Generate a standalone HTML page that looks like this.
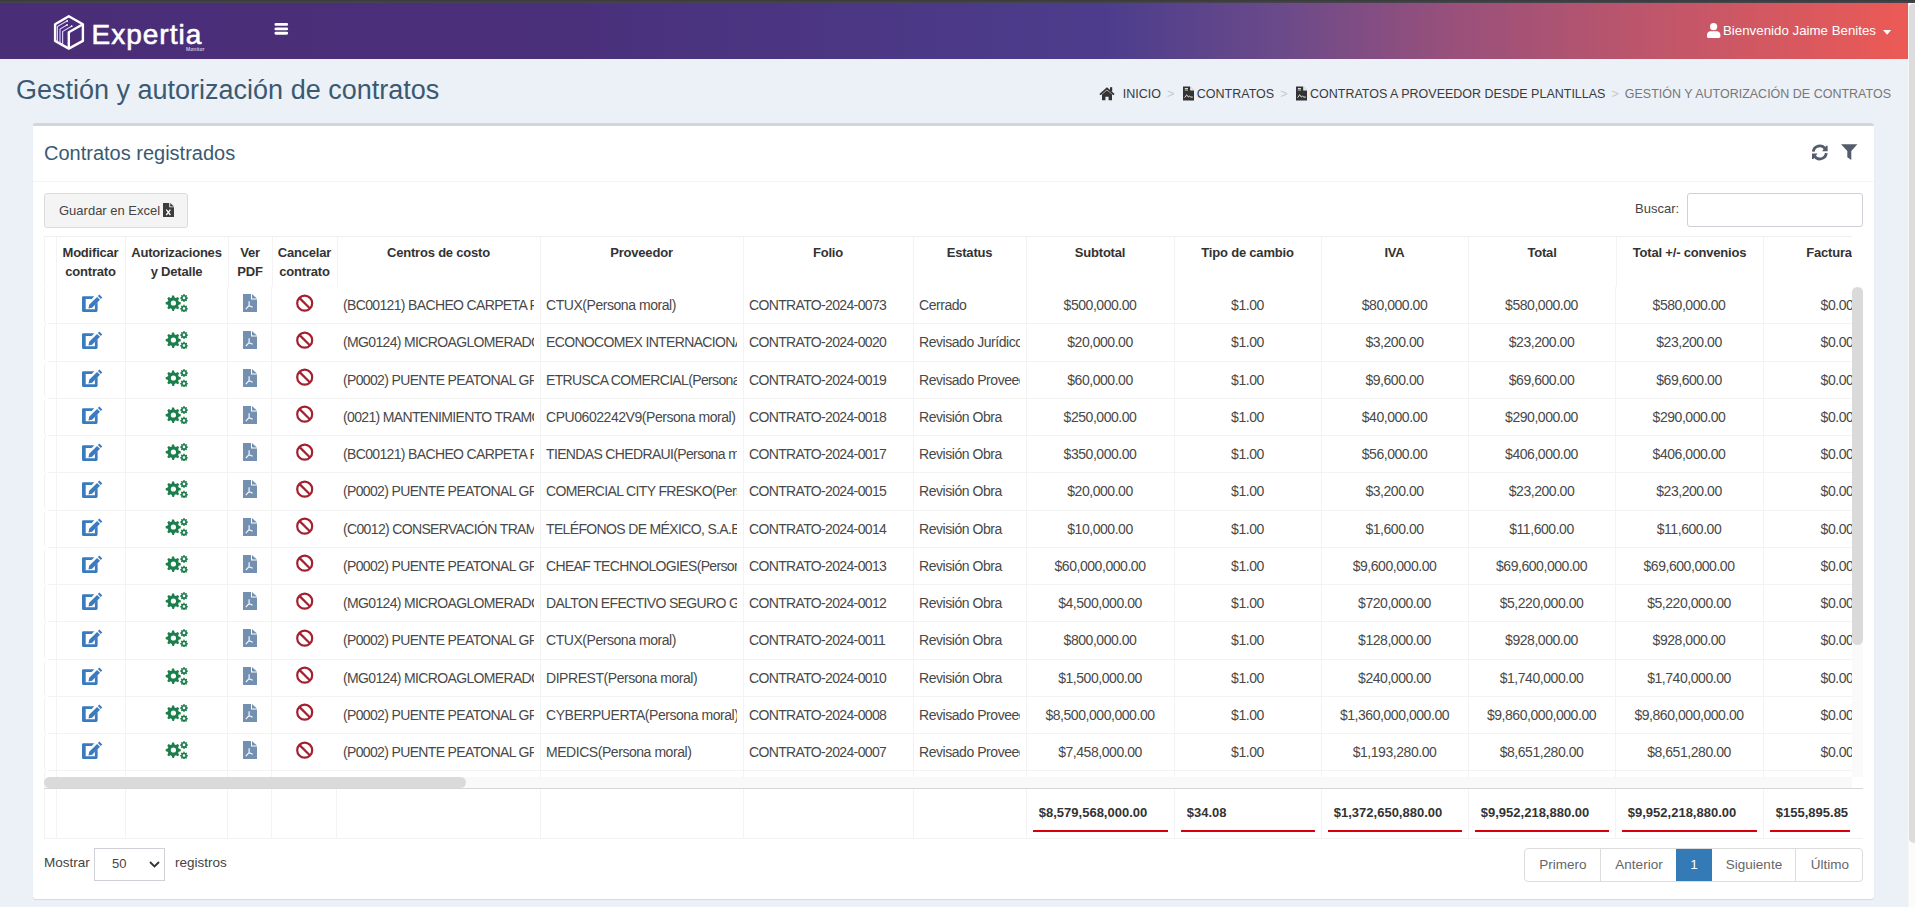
<!DOCTYPE html>
<html><head><meta charset="utf-8">
<style>
*{box-sizing:border-box;margin:0;padding:0}
html,body{width:1915px;height:907px;overflow:hidden}
body{background:#ecf0f7;font-family:"Liberation Sans",sans-serif;color:#333;position:relative}
.abs{position:absolute}
#topbar{left:0;top:0;width:1915px;height:3px;background:linear-gradient(#3a3b3b,#48454f)}
#nav{left:0;top:3px;width:1908px;height:56px;background:linear-gradient(to right,#4a2d77 0%,#4a2f7a 28%,#4c3d8c 58%,#6a4a8a 67%,#98507b 76%,#c0566a 87%,#ec5a55 100%)}
#pscroll{left:1908px;top:3px;width:7px;height:904px;background:#fbfbfb;border-left:1px solid #f6f6f6}
#pthumb{left:1909px;top:3.5px;width:6px;height:839.5px;background:#dcdcdc;border-radius:4px 0 0 5px}
.logo-t{left:91.5px;top:19px;font-size:28px;letter-spacing:1px;color:#fff;line-height:32px;white-space:nowrap;-webkit-text-stroke:.6px #fff}
.logo-m{left:186px;top:46px;font-size:5px;color:#f4f0fc;line-height:6px;letter-spacing:.3px}
.user{left:1723px;top:22.8px;height:16px;color:#fff;font-size:13.3px;line-height:16px;white-space:nowrap}
h1{position:absolute;left:16px;top:73.6px;font-size:27px;font-weight:normal;color:#3a5a72;line-height:32px;white-space:nowrap}
.bc{position:absolute;top:85.7px;right:24px;font-size:12.5px;line-height:16px;color:#3a3a3a;white-space:nowrap}
.bc .sep{color:#c8c8c8;margin:0 6px}
.bc .last{color:#777}
.bc svg{display:inline-block;vertical-align:top}
#box{left:33px;top:123px;width:1841px;height:776px;background:#fff;border-top:3px solid #d2d6de;border-radius:3px;box-shadow:0 1px 1px rgba(0,0,0,.1)}
.btitle{left:44px;top:141.4px;font-size:20px;color:#3a5a72;line-height:24px;white-space:nowrap}
#bhline{left:33px;top:181px;width:1841px;height:1px;background:#f4f4f4}
.btn{left:44px;top:193px;width:144px;height:35px;background:#f4f4f4;border:1px solid #dcdcdc;border-radius:3px}
.btntx{left:59px;top:202.5px;font-size:13px;color:#444;line-height:16px;white-space:nowrap}
.buscar{left:1635px;top:200.8px;font-size:13px;color:#444;line-height:16px}
.inp{left:1687px;top:193px;width:176px;height:34px;border:1px solid #cfd1d9;border-radius:3px;background:#fff}
#thead{left:44px;top:236px;width:1808px;height:51px;overflow:hidden;border-top:1px solid #f0f0f0}
.th{position:absolute;top:5.7px;text-align:center;font-weight:bold;font-size:13px;letter-spacing:-.2px;line-height:19px;color:#333;white-space:nowrap;overflow:hidden}
.hvl{position:absolute;top:0;width:1px;height:51px;background:#f3f3f3}
#tbody{left:44px;top:287px;width:1808px;height:490px;overflow:hidden}
.hl{position:absolute;left:4px;width:1804px;height:1px;background:#f3f3f3}
.vl{position:absolute;top:0;width:1px;height:490px;background:#f3f3f3}
.ic{position:absolute}
.rl{position:absolute;left:0;width:8px;border-left:1px solid #f1f1f1;border-radius:4px 0 0 4px}
.tl,.tc{position:absolute;font-size:14px;letter-spacing:-.45px;line-height:16px;color:#484848;white-space:nowrap;overflow:hidden}
.up{letter-spacing:-.65px}
.tc{text-align:center}
#vtrack{left:1852px;top:287px;width:11px;height:490px;background:#fafafa}
#vthumb{left:1852px;top:287px;width:11px;height:358px;background:#dadada;border-radius:6px}
#htrack{left:44px;top:777px;width:1808px;height:11px;background:#f9f9f9}
#hthumb{left:44px;top:777px;width:422px;height:11px;background:#dadada;border-radius:6px}
#tfoot{left:44px;top:788px;width:1819px;height:51px;border-top:1px solid #d6d6d6;border-bottom:1px solid #f2f2f2}
.fvl{position:absolute;top:0;width:1px;height:50px;background:#f3f3f3}
.ft{position:absolute;top:15.9px;height:27px;font-size:13px;font-weight:bold;line-height:16px;color:#333;padding-left:6px;border-bottom:2px solid #d8000c;white-space:nowrap;overflow:hidden}
.mostrar{left:44px;top:855.3px;font-size:13.5px;line-height:16px;color:#444}
.sel{left:94px;top:848px;width:71px;height:33px;border:1px solid #d0d0d6;background:#fff}
.seltx{left:112px;top:855.8px;font-size:13px;line-height:16px;color:#444}
.reg{left:175px;top:855.3px;font-size:13.5px;line-height:16px;color:#444}
.pag{left:1524px;top:848px;width:339px;height:34px;border:1px solid #dcdcdc;border-radius:4px;overflow:hidden}
.pg{position:absolute;top:0;height:32px;line-height:32px;text-align:center;font-size:13.5px;color:#666;border-left:1px solid #dcdcdc}
.pg.act{background:#337ab7;color:#fff;border-left:0;top:-1px;height:34px;line-height:34px}
</style></head><body>
<div id="topbar" class="abs"></div>
<div id="nav" class="abs"></div>
<div id="pscroll" class="abs"></div>
<div id="pthumb" class="abs"></div>
<svg class="abs" style="left:50px;top:12px" width="38" height="42" viewBox="0 0 38 42">
<g fill="none" stroke="#fff" stroke-width="2.4" stroke-linejoin="round">
<path d="M18.8 4.3L32.9 12.3V28.9L18.8 36.6L5.1 28.9V12.3Z"/>
<path d="M18.8 36.6V20.3L32.9 12.3"/>
</g>
<g fill="none" stroke="#d9c9ff" stroke-width="1.2">
<path d="M7.4 29.6V14.6l9.6-5.6"/>
<path d="M10 31V17.1l7-4.1"/>
<path d="M12.6 32.5V19.6l8.9-5.3"/>
</g>
<g fill="#fff"><circle cx="17.2" cy="8.9" r=".9"/><circle cx="17.1" cy="12.9" r=".9"/><circle cx="21.7" cy="14.2" r=".9"/></g>
</svg>
<div class="abs logo-t">Expertia</div>
<div class="abs logo-m">Monitor</div>
<svg class="abs" style="left:274px;top:21.8px" width="15" height="14" viewBox="0 0 15 14"><g stroke="#fff" stroke-width="2.9" stroke-linecap="round"><path d="M1.9 2.4h10.8M1.9 6.9h10.8M1.9 11.3h10.8"/></g></svg>
<svg class="abs" style="left:1707px;top:23px" width="14" height="15" viewBox="0 0 14 15"><circle cx="6.6" cy="3.7" r="3.6" fill="#fff"/><path fill="#fff" d="M3.6 8.2h6c2.1 0 3.8 1.7 3.8 3.8v1.5c0 .8-.6 1.4-1.4 1.4H1.2C.5 14.9 0 14.3 0 13.5V12c0-2.1 1.6-3.8 3.6-3.8z"/></svg>
<div class="abs user">Bienvenido Jaime Benites</div>
<svg class="abs" style="left:1882.5px;top:29.5px" width="9" height="5" viewBox="0 0 9 5"><path d="M0 0h8.2L4.1 4.8z" fill="#fff"/></svg>
<h1>Gestión y autorización de contratos</h1>
<div class="bc"><svg width="16" height="16" viewBox="0 0 16 16" style="margin-right:8px;margin-left:0"><path d="M1 8.6L8 2.4l7 6.2" fill="none" stroke="#333" stroke-width="1.9"/><rect x="11" y="1.2" width="2.2" height="4" fill="#333"/><path d="M3 8.6L8 4.2l5 4.4v5.7H9.6v-3.6H6.4v3.6H3z" fill="#333"/></svg>INICIO<span class="sep">&gt;</span><svg width="11" height="16" viewBox="0 0 11 16" style="margin-left:2.5px;margin-right:3px"><path d="M0 .5h7l4 4V14.5H0z" fill="#333"/><path d="M7.2.5v4h3.8" fill="#eceff4"/><path d="M7.2.5L11 4.5H7.2z" fill="#fff" opacity=".0"/><path d="M1.8 2.5h3.2M1.8 4h3.2" stroke="#fff" stroke-width=".8"/><path d="M1.5 11.5c1-.2 1.6-2.6 2.2-2.6.7 0 .8 2 1.6 2 .6 0 .7-.7 1.2-.7.5 0 .6.9 1.5.9h1.8" fill="none" stroke="#fff" stroke-width=".9"/></svg>CONTRATOS<span class="sep">&gt;</span><svg width="11" height="16" viewBox="0 0 11 16" style="margin-left:2.5px;margin-right:3px"><path d="M0 .5h7l4 4V14.5H0z" fill="#333"/><path d="M7.2.5v4h3.8" fill="#eceff4"/><path d="M1.8 2.5h3.2M1.8 4h3.2" stroke="#fff" stroke-width=".8"/><path d="M1.5 11.5c1-.2 1.6-2.6 2.2-2.6.7 0 .8 2 1.6 2 .6 0 .7-.7 1.2-.7.5 0 .6.9 1.5.9h1.8" fill="none" stroke="#fff" stroke-width=".9"/></svg>CONTRATOS A PROVEEDOR DESDE PLANTILLAS<span class="sep">&gt;</span><span class="last">GESTIÓN Y AUTORIZACIÓN DE CONTRATOS</span></div>
<div id="box" class="abs"></div>
<div class="abs btitle">Contratos registrados</div>
<svg class="abs" style="left:1811px;top:143.5px" width="18" height="17" viewBox="0 0 18 17"><g fill="none" stroke="#555c6e" stroke-width="2.8"><path d="M2.3 7.6A6.5 6.5 0 0 1 14.1 4.67"/><path d="M15.3 9.2A6.5 6.5 0 0 1 3.5 12.13"/></g><g fill="#555c6e"><path d="M15.3 1.7h1.3v5.65H11.1z"/><path d="M2.3 15.1H1V9.45h5.5z"/></g></svg>
<svg class="abs" style="left:1840.5px;top:144px" width="17" height="17" viewBox="0 0 17 17"><path fill="#555c6e" d="M0 .3h16.4L10.3 7v9L6.3 13.2V7z"/></svg>
<div id="bhline" class="abs"></div>
<div class="abs btn"></div>
<div class="abs btntx">Guardar en Excel</div>
<svg class="abs" style="left:163px;top:203px" width="11" height="14" viewBox="0 0 11 14"><path d="M0 0h6.2v4.3H11V14H0z" fill="#3d3d3d"/><path d="M7.2 0L11 3.4H7.2z" fill="#3d3d3d"/><path d="M3.3 6.6l4.1 5.4M7.4 6.6L3.3 12" stroke="#fff" stroke-width="1.3"/></svg>
<div class="abs buscar">Buscar:</div>
<div class="abs inp"></div>
<div id="thead" class="abs">
<div class="hvl" style="left:0"></div>
<div class="th" style="left:12.0px;width:69.0px">Modificar<br>contrato</div>
<div class="hvl" style="left:12.0px"></div>
<div class="th" style="left:81.0px;width:103.0px">Autorizaciones<br>y Detalle</div>
<div class="hvl" style="left:81.0px"></div>
<div class="th" style="left:184.0px;width:44.0px">Ver<br>PDF</div>
<div class="hvl" style="left:184.0px"></div>
<div class="th" style="left:228.0px;width:65.0px">Cancelar<br>contrato</div>
<div class="hvl" style="left:228.0px"></div>
<div class="th" style="left:293.0px;width:203.0px">Centros de costo</div>
<div class="hvl" style="left:293.0px"></div>
<div class="th" style="left:496.0px;width:203.0px">Proveedor</div>
<div class="hvl" style="left:496.0px"></div>
<div class="th" style="left:699.0px;width:170.0px">Folio</div>
<div class="hvl" style="left:699.0px"></div>
<div class="th" style="left:869.0px;width:113.0px">Estatus</div>
<div class="hvl" style="left:869.0px"></div>
<div class="th" style="left:982.0px;width:148.0px">Subtotal</div>
<div class="hvl" style="left:982.0px"></div>
<div class="th" style="left:1130.0px;width:147.0px">Tipo de cambio</div>
<div class="hvl" style="left:1130.0px"></div>
<div class="th" style="left:1277.0px;width:147.0px">IVA</div>
<div class="hvl" style="left:1277.0px"></div>
<div class="th" style="left:1424.0px;width:148.0px">Total</div>
<div class="hvl" style="left:1424.0px"></div>
<div class="th" style="left:1572.0px;width:147.0px">Total +/- convenios</div>
<div class="hvl" style="left:1572.0px"></div>
<div class="th" style="left:1719.0px;width:132.0px">Factura</div>
<div class="hvl" style="left:1719.0px"></div>
</div>
<div id="tbody" class="abs">
<div class="hl" style="top:36.25px"></div>
<div class="rl" style="top:0.00px;height:36.75px"></div>
<svg class="ic" style="left:37.5px;top:7.00px" width="21" height="18" viewBox="0 0 21 18"><path fill="#3a7bbf" d="M1.2 2.3h11.1l-2.6 2.6H3.7v10.3h9.2v-4.4l2.7-2.7v8.5c0 .7-.6 1.3-1.3 1.3H1.2C.5 17.9 0 17.3 0 16.6V3.6c0-.7.5-1.3 1.2-1.3z"/><path fill="#3a7bbf" d="M17.4.6l2.9 2.9-1.5 1.5-2.9-2.9zM15.1 2.9l2.9 2.9-7.9 7.9-3.6.8.7-3.7z"/></svg>
<svg class="ic" style="left:120.75px;top:7.00px" width="23" height="18" viewBox="0 0 23 18"><g fill="#1b7f4c"><path transform="translate(0,-.8)" d="M7 2.2l2 .1.6 2 1.3.6 1.8-1 1.4 1.4-1 1.8.6 1.3 2 .6v2l-2 .6-.6 1.3 1 1.8-1.4 1.4-1.8-1-1.3.6-.6 2H7.4l-.6-2-1.3-.6-1.8 1-1.4-1.4 1-1.8-.6-1.3-2-.6v-2l2-.6.6-1.3-1-1.8 1.4-1.4 1.8 1 1.3-.6zM8.4 7.2a2.6 2.6 0 100 5.2 2.6 2.6 0 000-5.2z"/><path d="M18.5 0l1 .1.3 1 .7.4.9-.5.7.7-.5.9.3.7 1 .3v1l-1 .3-.3.7.5.9-.7.7-.9-.5-.7.3-.3 1h-1l-.3-1-.7-.3-.9.5-.7-.7.5-.9-.3-.7-1-.3v-1l1-.3.3-.7-.5-.9.7-.7.9.5.7-.4zM19 2.6a1.3 1.3 0 100 2.6 1.3 1.3 0 000-2.6z"/><path d="M18.5 10.6l1 .1.3 1 .7.4.9-.5.7.7-.5.9.3.7 1 .3v1l-1 .3-.3.7.5.9-.7.7-.9-.5-.7.3-.3 1h-1l-.3-1-.7-.3-.9.5-.7-.7.5-.9-.3-.7-1-.3v-1l1-.3.3-.7-.5-.9.7-.7.9.5.7-.4zM19 13.2a1.3 1.3 0 100 2.6 1.3 1.3 0 000-2.6z"/></g></svg>
<svg class="ic" style="left:199.0px;top:7.00px" width="14" height="18" viewBox="0 0 14 18"><path fill="#7490b0" d="M0 0h8v5.5h6V18H0z"/><path fill="#7490b0" d="M9 0l5 4.6H9z"/><path fill="none" stroke="#fff" stroke-width="1.1" d="M6.1 7.3v4.4M6.1 11.7l3.6 1.6M6.1 11.7l-3.3 3.5"/></svg>
<svg class="ic" style="left:251.5px;top:6.50px" width="18" height="18" viewBox="0 0 18 18"><circle cx="8.7" cy="9.2" r="7.5" fill="none" stroke="#a3202f" stroke-width="2.2"/><path d="M3.6 4.1l10.2 10.2" stroke="#a3202f" stroke-width="2.2"/></svg>
<div class="tl up" style="left:299.0px;top:10.20px;width:191.0px">(BC00121) BACHEO CARPETA RAMPA</div>
<div class="tl" style="left:502.0px;top:10.20px;width:191.0px">CTUX(Persona moral)</div>
<div class="tl up" style="left:705.0px;top:10.20px;width:158.0px">CONTRATO-2024-0073</div>
<div class="tl" style="left:875.0px;top:10.20px;width:101.0px">Cerrado</div>
<div class="tc" style="left:982.0px;top:10.20px;width:148.0px">$500,000.00</div>
<div class="tc" style="left:1130.0px;top:10.20px;width:147.0px">$1.00</div>
<div class="tc" style="left:1277.0px;top:10.20px;width:147.0px">$80,000.00</div>
<div class="tc" style="left:1424.0px;top:10.20px;width:147.0px">$580,000.00</div>
<div class="tc" style="left:1571.0px;top:10.20px;width:148.0px">$580,000.00</div>
<div class="tc" style="left:1719.0px;top:10.20px;width:148.0px">$0.00</div>
<div class="hl" style="top:73.50px"></div>
<div class="rl" style="top:37.25px;height:36.75px"></div>
<svg class="ic" style="left:37.5px;top:44.25px" width="21" height="18" viewBox="0 0 21 18"><path fill="#3a7bbf" d="M1.2 2.3h11.1l-2.6 2.6H3.7v10.3h9.2v-4.4l2.7-2.7v8.5c0 .7-.6 1.3-1.3 1.3H1.2C.5 17.9 0 17.3 0 16.6V3.6c0-.7.5-1.3 1.2-1.3z"/><path fill="#3a7bbf" d="M17.4.6l2.9 2.9-1.5 1.5-2.9-2.9zM15.1 2.9l2.9 2.9-7.9 7.9-3.6.8.7-3.7z"/></svg>
<svg class="ic" style="left:120.75px;top:44.25px" width="23" height="18" viewBox="0 0 23 18"><g fill="#1b7f4c"><path transform="translate(0,-.8)" d="M7 2.2l2 .1.6 2 1.3.6 1.8-1 1.4 1.4-1 1.8.6 1.3 2 .6v2l-2 .6-.6 1.3 1 1.8-1.4 1.4-1.8-1-1.3.6-.6 2H7.4l-.6-2-1.3-.6-1.8 1-1.4-1.4 1-1.8-.6-1.3-2-.6v-2l2-.6.6-1.3-1-1.8 1.4-1.4 1.8 1 1.3-.6zM8.4 7.2a2.6 2.6 0 100 5.2 2.6 2.6 0 000-5.2z"/><path d="M18.5 0l1 .1.3 1 .7.4.9-.5.7.7-.5.9.3.7 1 .3v1l-1 .3-.3.7.5.9-.7.7-.9-.5-.7.3-.3 1h-1l-.3-1-.7-.3-.9.5-.7-.7.5-.9-.3-.7-1-.3v-1l1-.3.3-.7-.5-.9.7-.7.9.5.7-.4zM19 2.6a1.3 1.3 0 100 2.6 1.3 1.3 0 000-2.6z"/><path d="M18.5 10.6l1 .1.3 1 .7.4.9-.5.7.7-.5.9.3.7 1 .3v1l-1 .3-.3.7.5.9-.7.7-.9-.5-.7.3-.3 1h-1l-.3-1-.7-.3-.9.5-.7-.7.5-.9-.3-.7-1-.3v-1l1-.3.3-.7-.5-.9.7-.7.9.5.7-.4zM19 13.2a1.3 1.3 0 100 2.6 1.3 1.3 0 000-2.6z"/></g></svg>
<svg class="ic" style="left:199.0px;top:44.25px" width="14" height="18" viewBox="0 0 14 18"><path fill="#7490b0" d="M0 0h8v5.5h6V18H0z"/><path fill="#7490b0" d="M9 0l5 4.6H9z"/><path fill="none" stroke="#fff" stroke-width="1.1" d="M6.1 7.3v4.4M6.1 11.7l3.6 1.6M6.1 11.7l-3.3 3.5"/></svg>
<svg class="ic" style="left:251.5px;top:43.75px" width="18" height="18" viewBox="0 0 18 18"><circle cx="8.7" cy="9.2" r="7.5" fill="none" stroke="#a3202f" stroke-width="2.2"/><path d="M3.6 4.1l10.2 10.2" stroke="#a3202f" stroke-width="2.2"/></svg>
<div class="tl up" style="left:299.0px;top:47.45px;width:191.0px">(MG0124) MICROAGLOMERADO ASFALTICO</div>
<div class="tl up" style="left:502.0px;top:47.45px;width:191.0px">ECONOCOMEX INTERNACIONAL(Persona moral)</div>
<div class="tl up" style="left:705.0px;top:47.45px;width:158.0px">CONTRATO-2024-0020</div>
<div class="tl" style="left:875.0px;top:47.45px;width:101.0px">Revisado Jurídico</div>
<div class="tc" style="left:982.0px;top:47.45px;width:148.0px">$20,000.00</div>
<div class="tc" style="left:1130.0px;top:47.45px;width:147.0px">$1.00</div>
<div class="tc" style="left:1277.0px;top:47.45px;width:147.0px">$3,200.00</div>
<div class="tc" style="left:1424.0px;top:47.45px;width:147.0px">$23,200.00</div>
<div class="tc" style="left:1571.0px;top:47.45px;width:148.0px">$23,200.00</div>
<div class="tc" style="left:1719.0px;top:47.45px;width:148.0px">$0.00</div>
<div class="hl" style="top:110.75px"></div>
<div class="rl" style="top:74.50px;height:36.75px"></div>
<svg class="ic" style="left:37.5px;top:81.50px" width="21" height="18" viewBox="0 0 21 18"><path fill="#3a7bbf" d="M1.2 2.3h11.1l-2.6 2.6H3.7v10.3h9.2v-4.4l2.7-2.7v8.5c0 .7-.6 1.3-1.3 1.3H1.2C.5 17.9 0 17.3 0 16.6V3.6c0-.7.5-1.3 1.2-1.3z"/><path fill="#3a7bbf" d="M17.4.6l2.9 2.9-1.5 1.5-2.9-2.9zM15.1 2.9l2.9 2.9-7.9 7.9-3.6.8.7-3.7z"/></svg>
<svg class="ic" style="left:120.75px;top:81.50px" width="23" height="18" viewBox="0 0 23 18"><g fill="#1b7f4c"><path transform="translate(0,-.8)" d="M7 2.2l2 .1.6 2 1.3.6 1.8-1 1.4 1.4-1 1.8.6 1.3 2 .6v2l-2 .6-.6 1.3 1 1.8-1.4 1.4-1.8-1-1.3.6-.6 2H7.4l-.6-2-1.3-.6-1.8 1-1.4-1.4 1-1.8-.6-1.3-2-.6v-2l2-.6.6-1.3-1-1.8 1.4-1.4 1.8 1 1.3-.6zM8.4 7.2a2.6 2.6 0 100 5.2 2.6 2.6 0 000-5.2z"/><path d="M18.5 0l1 .1.3 1 .7.4.9-.5.7.7-.5.9.3.7 1 .3v1l-1 .3-.3.7.5.9-.7.7-.9-.5-.7.3-.3 1h-1l-.3-1-.7-.3-.9.5-.7-.7.5-.9-.3-.7-1-.3v-1l1-.3.3-.7-.5-.9.7-.7.9.5.7-.4zM19 2.6a1.3 1.3 0 100 2.6 1.3 1.3 0 000-2.6z"/><path d="M18.5 10.6l1 .1.3 1 .7.4.9-.5.7.7-.5.9.3.7 1 .3v1l-1 .3-.3.7.5.9-.7.7-.9-.5-.7.3-.3 1h-1l-.3-1-.7-.3-.9.5-.7-.7.5-.9-.3-.7-1-.3v-1l1-.3.3-.7-.5-.9.7-.7.9.5.7-.4zM19 13.2a1.3 1.3 0 100 2.6 1.3 1.3 0 000-2.6z"/></g></svg>
<svg class="ic" style="left:199.0px;top:81.50px" width="14" height="18" viewBox="0 0 14 18"><path fill="#7490b0" d="M0 0h8v5.5h6V18H0z"/><path fill="#7490b0" d="M9 0l5 4.6H9z"/><path fill="none" stroke="#fff" stroke-width="1.1" d="M6.1 7.3v4.4M6.1 11.7l3.6 1.6M6.1 11.7l-3.3 3.5"/></svg>
<svg class="ic" style="left:251.5px;top:81.00px" width="18" height="18" viewBox="0 0 18 18"><circle cx="8.7" cy="9.2" r="7.5" fill="none" stroke="#a3202f" stroke-width="2.2"/><path d="M3.6 4.1l10.2 10.2" stroke="#a3202f" stroke-width="2.2"/></svg>
<div class="tl up" style="left:299.0px;top:84.70px;width:191.0px">(P0002) PUENTE PEATONAL GRANDE</div>
<div class="tl up" style="left:502.0px;top:84.70px;width:191.0px">ETRUSCA COMERCIAL(Persona moral)</div>
<div class="tl up" style="left:705.0px;top:84.70px;width:158.0px">CONTRATO-2024-0019</div>
<div class="tl" style="left:875.0px;top:84.70px;width:101.0px">Revisado Proveedor</div>
<div class="tc" style="left:982.0px;top:84.70px;width:148.0px">$60,000.00</div>
<div class="tc" style="left:1130.0px;top:84.70px;width:147.0px">$1.00</div>
<div class="tc" style="left:1277.0px;top:84.70px;width:147.0px">$9,600.00</div>
<div class="tc" style="left:1424.0px;top:84.70px;width:147.0px">$69,600.00</div>
<div class="tc" style="left:1571.0px;top:84.70px;width:148.0px">$69,600.00</div>
<div class="tc" style="left:1719.0px;top:84.70px;width:148.0px">$0.00</div>
<div class="hl" style="top:148.00px"></div>
<div class="rl" style="top:111.75px;height:36.75px"></div>
<svg class="ic" style="left:37.5px;top:118.75px" width="21" height="18" viewBox="0 0 21 18"><path fill="#3a7bbf" d="M1.2 2.3h11.1l-2.6 2.6H3.7v10.3h9.2v-4.4l2.7-2.7v8.5c0 .7-.6 1.3-1.3 1.3H1.2C.5 17.9 0 17.3 0 16.6V3.6c0-.7.5-1.3 1.2-1.3z"/><path fill="#3a7bbf" d="M17.4.6l2.9 2.9-1.5 1.5-2.9-2.9zM15.1 2.9l2.9 2.9-7.9 7.9-3.6.8.7-3.7z"/></svg>
<svg class="ic" style="left:120.75px;top:118.75px" width="23" height="18" viewBox="0 0 23 18"><g fill="#1b7f4c"><path transform="translate(0,-.8)" d="M7 2.2l2 .1.6 2 1.3.6 1.8-1 1.4 1.4-1 1.8.6 1.3 2 .6v2l-2 .6-.6 1.3 1 1.8-1.4 1.4-1.8-1-1.3.6-.6 2H7.4l-.6-2-1.3-.6-1.8 1-1.4-1.4 1-1.8-.6-1.3-2-.6v-2l2-.6.6-1.3-1-1.8 1.4-1.4 1.8 1 1.3-.6zM8.4 7.2a2.6 2.6 0 100 5.2 2.6 2.6 0 000-5.2z"/><path d="M18.5 0l1 .1.3 1 .7.4.9-.5.7.7-.5.9.3.7 1 .3v1l-1 .3-.3.7.5.9-.7.7-.9-.5-.7.3-.3 1h-1l-.3-1-.7-.3-.9.5-.7-.7.5-.9-.3-.7-1-.3v-1l1-.3.3-.7-.5-.9.7-.7.9.5.7-.4zM19 2.6a1.3 1.3 0 100 2.6 1.3 1.3 0 000-2.6z"/><path d="M18.5 10.6l1 .1.3 1 .7.4.9-.5.7.7-.5.9.3.7 1 .3v1l-1 .3-.3.7.5.9-.7.7-.9-.5-.7.3-.3 1h-1l-.3-1-.7-.3-.9.5-.7-.7.5-.9-.3-.7-1-.3v-1l1-.3.3-.7-.5-.9.7-.7.9.5.7-.4zM19 13.2a1.3 1.3 0 100 2.6 1.3 1.3 0 000-2.6z"/></g></svg>
<svg class="ic" style="left:199.0px;top:118.75px" width="14" height="18" viewBox="0 0 14 18"><path fill="#7490b0" d="M0 0h8v5.5h6V18H0z"/><path fill="#7490b0" d="M9 0l5 4.6H9z"/><path fill="none" stroke="#fff" stroke-width="1.1" d="M6.1 7.3v4.4M6.1 11.7l3.6 1.6M6.1 11.7l-3.3 3.5"/></svg>
<svg class="ic" style="left:251.5px;top:118.25px" width="18" height="18" viewBox="0 0 18 18"><circle cx="8.7" cy="9.2" r="7.5" fill="none" stroke="#a3202f" stroke-width="2.2"/><path d="M3.6 4.1l10.2 10.2" stroke="#a3202f" stroke-width="2.2"/></svg>
<div class="tl up" style="left:299.0px;top:121.95px;width:191.0px">(0021) MANTENIMIENTO TRAMO</div>
<div class="tl" style="left:502.0px;top:121.95px;width:191.0px">CPU0602242V9(Persona moral)</div>
<div class="tl up" style="left:705.0px;top:121.95px;width:158.0px">CONTRATO-2024-0018</div>
<div class="tl" style="left:875.0px;top:121.95px;width:101.0px">Revisión Obra</div>
<div class="tc" style="left:982.0px;top:121.95px;width:148.0px">$250,000.00</div>
<div class="tc" style="left:1130.0px;top:121.95px;width:147.0px">$1.00</div>
<div class="tc" style="left:1277.0px;top:121.95px;width:147.0px">$40,000.00</div>
<div class="tc" style="left:1424.0px;top:121.95px;width:147.0px">$290,000.00</div>
<div class="tc" style="left:1571.0px;top:121.95px;width:148.0px">$290,000.00</div>
<div class="tc" style="left:1719.0px;top:121.95px;width:148.0px">$0.00</div>
<div class="hl" style="top:185.25px"></div>
<div class="rl" style="top:149.00px;height:36.75px"></div>
<svg class="ic" style="left:37.5px;top:156.00px" width="21" height="18" viewBox="0 0 21 18"><path fill="#3a7bbf" d="M1.2 2.3h11.1l-2.6 2.6H3.7v10.3h9.2v-4.4l2.7-2.7v8.5c0 .7-.6 1.3-1.3 1.3H1.2C.5 17.9 0 17.3 0 16.6V3.6c0-.7.5-1.3 1.2-1.3z"/><path fill="#3a7bbf" d="M17.4.6l2.9 2.9-1.5 1.5-2.9-2.9zM15.1 2.9l2.9 2.9-7.9 7.9-3.6.8.7-3.7z"/></svg>
<svg class="ic" style="left:120.75px;top:156.00px" width="23" height="18" viewBox="0 0 23 18"><g fill="#1b7f4c"><path transform="translate(0,-.8)" d="M7 2.2l2 .1.6 2 1.3.6 1.8-1 1.4 1.4-1 1.8.6 1.3 2 .6v2l-2 .6-.6 1.3 1 1.8-1.4 1.4-1.8-1-1.3.6-.6 2H7.4l-.6-2-1.3-.6-1.8 1-1.4-1.4 1-1.8-.6-1.3-2-.6v-2l2-.6.6-1.3-1-1.8 1.4-1.4 1.8 1 1.3-.6zM8.4 7.2a2.6 2.6 0 100 5.2 2.6 2.6 0 000-5.2z"/><path d="M18.5 0l1 .1.3 1 .7.4.9-.5.7.7-.5.9.3.7 1 .3v1l-1 .3-.3.7.5.9-.7.7-.9-.5-.7.3-.3 1h-1l-.3-1-.7-.3-.9.5-.7-.7.5-.9-.3-.7-1-.3v-1l1-.3.3-.7-.5-.9.7-.7.9.5.7-.4zM19 2.6a1.3 1.3 0 100 2.6 1.3 1.3 0 000-2.6z"/><path d="M18.5 10.6l1 .1.3 1 .7.4.9-.5.7.7-.5.9.3.7 1 .3v1l-1 .3-.3.7.5.9-.7.7-.9-.5-.7.3-.3 1h-1l-.3-1-.7-.3-.9.5-.7-.7.5-.9-.3-.7-1-.3v-1l1-.3.3-.7-.5-.9.7-.7.9.5.7-.4zM19 13.2a1.3 1.3 0 100 2.6 1.3 1.3 0 000-2.6z"/></g></svg>
<svg class="ic" style="left:199.0px;top:156.00px" width="14" height="18" viewBox="0 0 14 18"><path fill="#7490b0" d="M0 0h8v5.5h6V18H0z"/><path fill="#7490b0" d="M9 0l5 4.6H9z"/><path fill="none" stroke="#fff" stroke-width="1.1" d="M6.1 7.3v4.4M6.1 11.7l3.6 1.6M6.1 11.7l-3.3 3.5"/></svg>
<svg class="ic" style="left:251.5px;top:155.50px" width="18" height="18" viewBox="0 0 18 18"><circle cx="8.7" cy="9.2" r="7.5" fill="none" stroke="#a3202f" stroke-width="2.2"/><path d="M3.6 4.1l10.2 10.2" stroke="#a3202f" stroke-width="2.2"/></svg>
<div class="tl up" style="left:299.0px;top:159.20px;width:191.0px">(BC00121) BACHEO CARPETA RAMPA</div>
<div class="tl up" style="left:502.0px;top:159.20px;width:191.0px">TIENDAS CHEDRAUI(Persona moral)</div>
<div class="tl up" style="left:705.0px;top:159.20px;width:158.0px">CONTRATO-2024-0017</div>
<div class="tl" style="left:875.0px;top:159.20px;width:101.0px">Revisión Obra</div>
<div class="tc" style="left:982.0px;top:159.20px;width:148.0px">$350,000.00</div>
<div class="tc" style="left:1130.0px;top:159.20px;width:147.0px">$1.00</div>
<div class="tc" style="left:1277.0px;top:159.20px;width:147.0px">$56,000.00</div>
<div class="tc" style="left:1424.0px;top:159.20px;width:147.0px">$406,000.00</div>
<div class="tc" style="left:1571.0px;top:159.20px;width:148.0px">$406,000.00</div>
<div class="tc" style="left:1719.0px;top:159.20px;width:148.0px">$0.00</div>
<div class="hl" style="top:222.50px"></div>
<div class="rl" style="top:186.25px;height:36.75px"></div>
<svg class="ic" style="left:37.5px;top:193.25px" width="21" height="18" viewBox="0 0 21 18"><path fill="#3a7bbf" d="M1.2 2.3h11.1l-2.6 2.6H3.7v10.3h9.2v-4.4l2.7-2.7v8.5c0 .7-.6 1.3-1.3 1.3H1.2C.5 17.9 0 17.3 0 16.6V3.6c0-.7.5-1.3 1.2-1.3z"/><path fill="#3a7bbf" d="M17.4.6l2.9 2.9-1.5 1.5-2.9-2.9zM15.1 2.9l2.9 2.9-7.9 7.9-3.6.8.7-3.7z"/></svg>
<svg class="ic" style="left:120.75px;top:193.25px" width="23" height="18" viewBox="0 0 23 18"><g fill="#1b7f4c"><path transform="translate(0,-.8)" d="M7 2.2l2 .1.6 2 1.3.6 1.8-1 1.4 1.4-1 1.8.6 1.3 2 .6v2l-2 .6-.6 1.3 1 1.8-1.4 1.4-1.8-1-1.3.6-.6 2H7.4l-.6-2-1.3-.6-1.8 1-1.4-1.4 1-1.8-.6-1.3-2-.6v-2l2-.6.6-1.3-1-1.8 1.4-1.4 1.8 1 1.3-.6zM8.4 7.2a2.6 2.6 0 100 5.2 2.6 2.6 0 000-5.2z"/><path d="M18.5 0l1 .1.3 1 .7.4.9-.5.7.7-.5.9.3.7 1 .3v1l-1 .3-.3.7.5.9-.7.7-.9-.5-.7.3-.3 1h-1l-.3-1-.7-.3-.9.5-.7-.7.5-.9-.3-.7-1-.3v-1l1-.3.3-.7-.5-.9.7-.7.9.5.7-.4zM19 2.6a1.3 1.3 0 100 2.6 1.3 1.3 0 000-2.6z"/><path d="M18.5 10.6l1 .1.3 1 .7.4.9-.5.7.7-.5.9.3.7 1 .3v1l-1 .3-.3.7.5.9-.7.7-.9-.5-.7.3-.3 1h-1l-.3-1-.7-.3-.9.5-.7-.7.5-.9-.3-.7-1-.3v-1l1-.3.3-.7-.5-.9.7-.7.9.5.7-.4zM19 13.2a1.3 1.3 0 100 2.6 1.3 1.3 0 000-2.6z"/></g></svg>
<svg class="ic" style="left:199.0px;top:193.25px" width="14" height="18" viewBox="0 0 14 18"><path fill="#7490b0" d="M0 0h8v5.5h6V18H0z"/><path fill="#7490b0" d="M9 0l5 4.6H9z"/><path fill="none" stroke="#fff" stroke-width="1.1" d="M6.1 7.3v4.4M6.1 11.7l3.6 1.6M6.1 11.7l-3.3 3.5"/></svg>
<svg class="ic" style="left:251.5px;top:192.75px" width="18" height="18" viewBox="0 0 18 18"><circle cx="8.7" cy="9.2" r="7.5" fill="none" stroke="#a3202f" stroke-width="2.2"/><path d="M3.6 4.1l10.2 10.2" stroke="#a3202f" stroke-width="2.2"/></svg>
<div class="tl up" style="left:299.0px;top:196.45px;width:191.0px">(P0002) PUENTE PEATONAL GRANDE</div>
<div class="tl up" style="left:502.0px;top:196.45px;width:191.0px">COMERCIAL CITY FRESKO(Persona moral)</div>
<div class="tl up" style="left:705.0px;top:196.45px;width:158.0px">CONTRATO-2024-0015</div>
<div class="tl" style="left:875.0px;top:196.45px;width:101.0px">Revisión Obra</div>
<div class="tc" style="left:982.0px;top:196.45px;width:148.0px">$20,000.00</div>
<div class="tc" style="left:1130.0px;top:196.45px;width:147.0px">$1.00</div>
<div class="tc" style="left:1277.0px;top:196.45px;width:147.0px">$3,200.00</div>
<div class="tc" style="left:1424.0px;top:196.45px;width:147.0px">$23,200.00</div>
<div class="tc" style="left:1571.0px;top:196.45px;width:148.0px">$23,200.00</div>
<div class="tc" style="left:1719.0px;top:196.45px;width:148.0px">$0.00</div>
<div class="hl" style="top:259.75px"></div>
<div class="rl" style="top:223.50px;height:36.75px"></div>
<svg class="ic" style="left:37.5px;top:230.50px" width="21" height="18" viewBox="0 0 21 18"><path fill="#3a7bbf" d="M1.2 2.3h11.1l-2.6 2.6H3.7v10.3h9.2v-4.4l2.7-2.7v8.5c0 .7-.6 1.3-1.3 1.3H1.2C.5 17.9 0 17.3 0 16.6V3.6c0-.7.5-1.3 1.2-1.3z"/><path fill="#3a7bbf" d="M17.4.6l2.9 2.9-1.5 1.5-2.9-2.9zM15.1 2.9l2.9 2.9-7.9 7.9-3.6.8.7-3.7z"/></svg>
<svg class="ic" style="left:120.75px;top:230.50px" width="23" height="18" viewBox="0 0 23 18"><g fill="#1b7f4c"><path transform="translate(0,-.8)" d="M7 2.2l2 .1.6 2 1.3.6 1.8-1 1.4 1.4-1 1.8.6 1.3 2 .6v2l-2 .6-.6 1.3 1 1.8-1.4 1.4-1.8-1-1.3.6-.6 2H7.4l-.6-2-1.3-.6-1.8 1-1.4-1.4 1-1.8-.6-1.3-2-.6v-2l2-.6.6-1.3-1-1.8 1.4-1.4 1.8 1 1.3-.6zM8.4 7.2a2.6 2.6 0 100 5.2 2.6 2.6 0 000-5.2z"/><path d="M18.5 0l1 .1.3 1 .7.4.9-.5.7.7-.5.9.3.7 1 .3v1l-1 .3-.3.7.5.9-.7.7-.9-.5-.7.3-.3 1h-1l-.3-1-.7-.3-.9.5-.7-.7.5-.9-.3-.7-1-.3v-1l1-.3.3-.7-.5-.9.7-.7.9.5.7-.4zM19 2.6a1.3 1.3 0 100 2.6 1.3 1.3 0 000-2.6z"/><path d="M18.5 10.6l1 .1.3 1 .7.4.9-.5.7.7-.5.9.3.7 1 .3v1l-1 .3-.3.7.5.9-.7.7-.9-.5-.7.3-.3 1h-1l-.3-1-.7-.3-.9.5-.7-.7.5-.9-.3-.7-1-.3v-1l1-.3.3-.7-.5-.9.7-.7.9.5.7-.4zM19 13.2a1.3 1.3 0 100 2.6 1.3 1.3 0 000-2.6z"/></g></svg>
<svg class="ic" style="left:199.0px;top:230.50px" width="14" height="18" viewBox="0 0 14 18"><path fill="#7490b0" d="M0 0h8v5.5h6V18H0z"/><path fill="#7490b0" d="M9 0l5 4.6H9z"/><path fill="none" stroke="#fff" stroke-width="1.1" d="M6.1 7.3v4.4M6.1 11.7l3.6 1.6M6.1 11.7l-3.3 3.5"/></svg>
<svg class="ic" style="left:251.5px;top:230.00px" width="18" height="18" viewBox="0 0 18 18"><circle cx="8.7" cy="9.2" r="7.5" fill="none" stroke="#a3202f" stroke-width="2.2"/><path d="M3.6 4.1l10.2 10.2" stroke="#a3202f" stroke-width="2.2"/></svg>
<div class="tl up" style="left:299.0px;top:233.70px;width:191.0px">(C0012) CONSERVACIÓN TRAMO</div>
<div class="tl up" style="left:502.0px;top:233.70px;width:191.0px">TELÉFONOS DE MÉXICO, S.A.B. DE C.V.</div>
<div class="tl up" style="left:705.0px;top:233.70px;width:158.0px">CONTRATO-2024-0014</div>
<div class="tl" style="left:875.0px;top:233.70px;width:101.0px">Revisión Obra</div>
<div class="tc" style="left:982.0px;top:233.70px;width:148.0px">$10,000.00</div>
<div class="tc" style="left:1130.0px;top:233.70px;width:147.0px">$1.00</div>
<div class="tc" style="left:1277.0px;top:233.70px;width:147.0px">$1,600.00</div>
<div class="tc" style="left:1424.0px;top:233.70px;width:147.0px">$11,600.00</div>
<div class="tc" style="left:1571.0px;top:233.70px;width:148.0px">$11,600.00</div>
<div class="tc" style="left:1719.0px;top:233.70px;width:148.0px">$0.00</div>
<div class="hl" style="top:297.00px"></div>
<div class="rl" style="top:260.75px;height:36.75px"></div>
<svg class="ic" style="left:37.5px;top:267.75px" width="21" height="18" viewBox="0 0 21 18"><path fill="#3a7bbf" d="M1.2 2.3h11.1l-2.6 2.6H3.7v10.3h9.2v-4.4l2.7-2.7v8.5c0 .7-.6 1.3-1.3 1.3H1.2C.5 17.9 0 17.3 0 16.6V3.6c0-.7.5-1.3 1.2-1.3z"/><path fill="#3a7bbf" d="M17.4.6l2.9 2.9-1.5 1.5-2.9-2.9zM15.1 2.9l2.9 2.9-7.9 7.9-3.6.8.7-3.7z"/></svg>
<svg class="ic" style="left:120.75px;top:267.75px" width="23" height="18" viewBox="0 0 23 18"><g fill="#1b7f4c"><path transform="translate(0,-.8)" d="M7 2.2l2 .1.6 2 1.3.6 1.8-1 1.4 1.4-1 1.8.6 1.3 2 .6v2l-2 .6-.6 1.3 1 1.8-1.4 1.4-1.8-1-1.3.6-.6 2H7.4l-.6-2-1.3-.6-1.8 1-1.4-1.4 1-1.8-.6-1.3-2-.6v-2l2-.6.6-1.3-1-1.8 1.4-1.4 1.8 1 1.3-.6zM8.4 7.2a2.6 2.6 0 100 5.2 2.6 2.6 0 000-5.2z"/><path d="M18.5 0l1 .1.3 1 .7.4.9-.5.7.7-.5.9.3.7 1 .3v1l-1 .3-.3.7.5.9-.7.7-.9-.5-.7.3-.3 1h-1l-.3-1-.7-.3-.9.5-.7-.7.5-.9-.3-.7-1-.3v-1l1-.3.3-.7-.5-.9.7-.7.9.5.7-.4zM19 2.6a1.3 1.3 0 100 2.6 1.3 1.3 0 000-2.6z"/><path d="M18.5 10.6l1 .1.3 1 .7.4.9-.5.7.7-.5.9.3.7 1 .3v1l-1 .3-.3.7.5.9-.7.7-.9-.5-.7.3-.3 1h-1l-.3-1-.7-.3-.9.5-.7-.7.5-.9-.3-.7-1-.3v-1l1-.3.3-.7-.5-.9.7-.7.9.5.7-.4zM19 13.2a1.3 1.3 0 100 2.6 1.3 1.3 0 000-2.6z"/></g></svg>
<svg class="ic" style="left:199.0px;top:267.75px" width="14" height="18" viewBox="0 0 14 18"><path fill="#7490b0" d="M0 0h8v5.5h6V18H0z"/><path fill="#7490b0" d="M9 0l5 4.6H9z"/><path fill="none" stroke="#fff" stroke-width="1.1" d="M6.1 7.3v4.4M6.1 11.7l3.6 1.6M6.1 11.7l-3.3 3.5"/></svg>
<svg class="ic" style="left:251.5px;top:267.25px" width="18" height="18" viewBox="0 0 18 18"><circle cx="8.7" cy="9.2" r="7.5" fill="none" stroke="#a3202f" stroke-width="2.2"/><path d="M3.6 4.1l10.2 10.2" stroke="#a3202f" stroke-width="2.2"/></svg>
<div class="tl up" style="left:299.0px;top:270.95px;width:191.0px">(P0002) PUENTE PEATONAL GRANDE</div>
<div class="tl up" style="left:502.0px;top:270.95px;width:191.0px">CHEAF TECHNOLOGIES(Persona moral)</div>
<div class="tl up" style="left:705.0px;top:270.95px;width:158.0px">CONTRATO-2024-0013</div>
<div class="tl" style="left:875.0px;top:270.95px;width:101.0px">Revisión Obra</div>
<div class="tc" style="left:982.0px;top:270.95px;width:148.0px">$60,000,000.00</div>
<div class="tc" style="left:1130.0px;top:270.95px;width:147.0px">$1.00</div>
<div class="tc" style="left:1277.0px;top:270.95px;width:147.0px">$9,600,000.00</div>
<div class="tc" style="left:1424.0px;top:270.95px;width:147.0px">$69,600,000.00</div>
<div class="tc" style="left:1571.0px;top:270.95px;width:148.0px">$69,600,000.00</div>
<div class="tc" style="left:1719.0px;top:270.95px;width:148.0px">$0.00</div>
<div class="hl" style="top:334.25px"></div>
<div class="rl" style="top:298.00px;height:36.75px"></div>
<svg class="ic" style="left:37.5px;top:305.00px" width="21" height="18" viewBox="0 0 21 18"><path fill="#3a7bbf" d="M1.2 2.3h11.1l-2.6 2.6H3.7v10.3h9.2v-4.4l2.7-2.7v8.5c0 .7-.6 1.3-1.3 1.3H1.2C.5 17.9 0 17.3 0 16.6V3.6c0-.7.5-1.3 1.2-1.3z"/><path fill="#3a7bbf" d="M17.4.6l2.9 2.9-1.5 1.5-2.9-2.9zM15.1 2.9l2.9 2.9-7.9 7.9-3.6.8.7-3.7z"/></svg>
<svg class="ic" style="left:120.75px;top:305.00px" width="23" height="18" viewBox="0 0 23 18"><g fill="#1b7f4c"><path transform="translate(0,-.8)" d="M7 2.2l2 .1.6 2 1.3.6 1.8-1 1.4 1.4-1 1.8.6 1.3 2 .6v2l-2 .6-.6 1.3 1 1.8-1.4 1.4-1.8-1-1.3.6-.6 2H7.4l-.6-2-1.3-.6-1.8 1-1.4-1.4 1-1.8-.6-1.3-2-.6v-2l2-.6.6-1.3-1-1.8 1.4-1.4 1.8 1 1.3-.6zM8.4 7.2a2.6 2.6 0 100 5.2 2.6 2.6 0 000-5.2z"/><path d="M18.5 0l1 .1.3 1 .7.4.9-.5.7.7-.5.9.3.7 1 .3v1l-1 .3-.3.7.5.9-.7.7-.9-.5-.7.3-.3 1h-1l-.3-1-.7-.3-.9.5-.7-.7.5-.9-.3-.7-1-.3v-1l1-.3.3-.7-.5-.9.7-.7.9.5.7-.4zM19 2.6a1.3 1.3 0 100 2.6 1.3 1.3 0 000-2.6z"/><path d="M18.5 10.6l1 .1.3 1 .7.4.9-.5.7.7-.5.9.3.7 1 .3v1l-1 .3-.3.7.5.9-.7.7-.9-.5-.7.3-.3 1h-1l-.3-1-.7-.3-.9.5-.7-.7.5-.9-.3-.7-1-.3v-1l1-.3.3-.7-.5-.9.7-.7.9.5.7-.4zM19 13.2a1.3 1.3 0 100 2.6 1.3 1.3 0 000-2.6z"/></g></svg>
<svg class="ic" style="left:199.0px;top:305.00px" width="14" height="18" viewBox="0 0 14 18"><path fill="#7490b0" d="M0 0h8v5.5h6V18H0z"/><path fill="#7490b0" d="M9 0l5 4.6H9z"/><path fill="none" stroke="#fff" stroke-width="1.1" d="M6.1 7.3v4.4M6.1 11.7l3.6 1.6M6.1 11.7l-3.3 3.5"/></svg>
<svg class="ic" style="left:251.5px;top:304.50px" width="18" height="18" viewBox="0 0 18 18"><circle cx="8.7" cy="9.2" r="7.5" fill="none" stroke="#a3202f" stroke-width="2.2"/><path d="M3.6 4.1l10.2 10.2" stroke="#a3202f" stroke-width="2.2"/></svg>
<div class="tl up" style="left:299.0px;top:308.20px;width:191.0px">(MG0124) MICROAGLOMERADO ASFALTICO</div>
<div class="tl up" style="left:502.0px;top:308.20px;width:191.0px">DALTON EFECTIVO SEGURO GDL</div>
<div class="tl up" style="left:705.0px;top:308.20px;width:158.0px">CONTRATO-2024-0012</div>
<div class="tl" style="left:875.0px;top:308.20px;width:101.0px">Revisión Obra</div>
<div class="tc" style="left:982.0px;top:308.20px;width:148.0px">$4,500,000.00</div>
<div class="tc" style="left:1130.0px;top:308.20px;width:147.0px">$1.00</div>
<div class="tc" style="left:1277.0px;top:308.20px;width:147.0px">$720,000.00</div>
<div class="tc" style="left:1424.0px;top:308.20px;width:147.0px">$5,220,000.00</div>
<div class="tc" style="left:1571.0px;top:308.20px;width:148.0px">$5,220,000.00</div>
<div class="tc" style="left:1719.0px;top:308.20px;width:148.0px">$0.00</div>
<div class="hl" style="top:371.50px"></div>
<div class="rl" style="top:335.25px;height:36.75px"></div>
<svg class="ic" style="left:37.5px;top:342.25px" width="21" height="18" viewBox="0 0 21 18"><path fill="#3a7bbf" d="M1.2 2.3h11.1l-2.6 2.6H3.7v10.3h9.2v-4.4l2.7-2.7v8.5c0 .7-.6 1.3-1.3 1.3H1.2C.5 17.9 0 17.3 0 16.6V3.6c0-.7.5-1.3 1.2-1.3z"/><path fill="#3a7bbf" d="M17.4.6l2.9 2.9-1.5 1.5-2.9-2.9zM15.1 2.9l2.9 2.9-7.9 7.9-3.6.8.7-3.7z"/></svg>
<svg class="ic" style="left:120.75px;top:342.25px" width="23" height="18" viewBox="0 0 23 18"><g fill="#1b7f4c"><path transform="translate(0,-.8)" d="M7 2.2l2 .1.6 2 1.3.6 1.8-1 1.4 1.4-1 1.8.6 1.3 2 .6v2l-2 .6-.6 1.3 1 1.8-1.4 1.4-1.8-1-1.3.6-.6 2H7.4l-.6-2-1.3-.6-1.8 1-1.4-1.4 1-1.8-.6-1.3-2-.6v-2l2-.6.6-1.3-1-1.8 1.4-1.4 1.8 1 1.3-.6zM8.4 7.2a2.6 2.6 0 100 5.2 2.6 2.6 0 000-5.2z"/><path d="M18.5 0l1 .1.3 1 .7.4.9-.5.7.7-.5.9.3.7 1 .3v1l-1 .3-.3.7.5.9-.7.7-.9-.5-.7.3-.3 1h-1l-.3-1-.7-.3-.9.5-.7-.7.5-.9-.3-.7-1-.3v-1l1-.3.3-.7-.5-.9.7-.7.9.5.7-.4zM19 2.6a1.3 1.3 0 100 2.6 1.3 1.3 0 000-2.6z"/><path d="M18.5 10.6l1 .1.3 1 .7.4.9-.5.7.7-.5.9.3.7 1 .3v1l-1 .3-.3.7.5.9-.7.7-.9-.5-.7.3-.3 1h-1l-.3-1-.7-.3-.9.5-.7-.7.5-.9-.3-.7-1-.3v-1l1-.3.3-.7-.5-.9.7-.7.9.5.7-.4zM19 13.2a1.3 1.3 0 100 2.6 1.3 1.3 0 000-2.6z"/></g></svg>
<svg class="ic" style="left:199.0px;top:342.25px" width="14" height="18" viewBox="0 0 14 18"><path fill="#7490b0" d="M0 0h8v5.5h6V18H0z"/><path fill="#7490b0" d="M9 0l5 4.6H9z"/><path fill="none" stroke="#fff" stroke-width="1.1" d="M6.1 7.3v4.4M6.1 11.7l3.6 1.6M6.1 11.7l-3.3 3.5"/></svg>
<svg class="ic" style="left:251.5px;top:341.75px" width="18" height="18" viewBox="0 0 18 18"><circle cx="8.7" cy="9.2" r="7.5" fill="none" stroke="#a3202f" stroke-width="2.2"/><path d="M3.6 4.1l10.2 10.2" stroke="#a3202f" stroke-width="2.2"/></svg>
<div class="tl up" style="left:299.0px;top:345.45px;width:191.0px">(P0002) PUENTE PEATONAL GRANDE</div>
<div class="tl" style="left:502.0px;top:345.45px;width:191.0px">CTUX(Persona moral)</div>
<div class="tl up" style="left:705.0px;top:345.45px;width:158.0px">CONTRATO-2024-0011</div>
<div class="tl" style="left:875.0px;top:345.45px;width:101.0px">Revisión Obra</div>
<div class="tc" style="left:982.0px;top:345.45px;width:148.0px">$800,000.00</div>
<div class="tc" style="left:1130.0px;top:345.45px;width:147.0px">$1.00</div>
<div class="tc" style="left:1277.0px;top:345.45px;width:147.0px">$128,000.00</div>
<div class="tc" style="left:1424.0px;top:345.45px;width:147.0px">$928,000.00</div>
<div class="tc" style="left:1571.0px;top:345.45px;width:148.0px">$928,000.00</div>
<div class="tc" style="left:1719.0px;top:345.45px;width:148.0px">$0.00</div>
<div class="hl" style="top:408.75px"></div>
<div class="rl" style="top:372.50px;height:36.75px"></div>
<svg class="ic" style="left:37.5px;top:379.50px" width="21" height="18" viewBox="0 0 21 18"><path fill="#3a7bbf" d="M1.2 2.3h11.1l-2.6 2.6H3.7v10.3h9.2v-4.4l2.7-2.7v8.5c0 .7-.6 1.3-1.3 1.3H1.2C.5 17.9 0 17.3 0 16.6V3.6c0-.7.5-1.3 1.2-1.3z"/><path fill="#3a7bbf" d="M17.4.6l2.9 2.9-1.5 1.5-2.9-2.9zM15.1 2.9l2.9 2.9-7.9 7.9-3.6.8.7-3.7z"/></svg>
<svg class="ic" style="left:120.75px;top:379.50px" width="23" height="18" viewBox="0 0 23 18"><g fill="#1b7f4c"><path transform="translate(0,-.8)" d="M7 2.2l2 .1.6 2 1.3.6 1.8-1 1.4 1.4-1 1.8.6 1.3 2 .6v2l-2 .6-.6 1.3 1 1.8-1.4 1.4-1.8-1-1.3.6-.6 2H7.4l-.6-2-1.3-.6-1.8 1-1.4-1.4 1-1.8-.6-1.3-2-.6v-2l2-.6.6-1.3-1-1.8 1.4-1.4 1.8 1 1.3-.6zM8.4 7.2a2.6 2.6 0 100 5.2 2.6 2.6 0 000-5.2z"/><path d="M18.5 0l1 .1.3 1 .7.4.9-.5.7.7-.5.9.3.7 1 .3v1l-1 .3-.3.7.5.9-.7.7-.9-.5-.7.3-.3 1h-1l-.3-1-.7-.3-.9.5-.7-.7.5-.9-.3-.7-1-.3v-1l1-.3.3-.7-.5-.9.7-.7.9.5.7-.4zM19 2.6a1.3 1.3 0 100 2.6 1.3 1.3 0 000-2.6z"/><path d="M18.5 10.6l1 .1.3 1 .7.4.9-.5.7.7-.5.9.3.7 1 .3v1l-1 .3-.3.7.5.9-.7.7-.9-.5-.7.3-.3 1h-1l-.3-1-.7-.3-.9.5-.7-.7.5-.9-.3-.7-1-.3v-1l1-.3.3-.7-.5-.9.7-.7.9.5.7-.4zM19 13.2a1.3 1.3 0 100 2.6 1.3 1.3 0 000-2.6z"/></g></svg>
<svg class="ic" style="left:199.0px;top:379.50px" width="14" height="18" viewBox="0 0 14 18"><path fill="#7490b0" d="M0 0h8v5.5h6V18H0z"/><path fill="#7490b0" d="M9 0l5 4.6H9z"/><path fill="none" stroke="#fff" stroke-width="1.1" d="M6.1 7.3v4.4M6.1 11.7l3.6 1.6M6.1 11.7l-3.3 3.5"/></svg>
<svg class="ic" style="left:251.5px;top:379.00px" width="18" height="18" viewBox="0 0 18 18"><circle cx="8.7" cy="9.2" r="7.5" fill="none" stroke="#a3202f" stroke-width="2.2"/><path d="M3.6 4.1l10.2 10.2" stroke="#a3202f" stroke-width="2.2"/></svg>
<div class="tl up" style="left:299.0px;top:382.70px;width:191.0px">(MG0124) MICROAGLOMERADO ASFALTICO</div>
<div class="tl" style="left:502.0px;top:382.70px;width:191.0px">DIPREST(Persona moral)</div>
<div class="tl up" style="left:705.0px;top:382.70px;width:158.0px">CONTRATO-2024-0010</div>
<div class="tl" style="left:875.0px;top:382.70px;width:101.0px">Revisión Obra</div>
<div class="tc" style="left:982.0px;top:382.70px;width:148.0px">$1,500,000.00</div>
<div class="tc" style="left:1130.0px;top:382.70px;width:147.0px">$1.00</div>
<div class="tc" style="left:1277.0px;top:382.70px;width:147.0px">$240,000.00</div>
<div class="tc" style="left:1424.0px;top:382.70px;width:147.0px">$1,740,000.00</div>
<div class="tc" style="left:1571.0px;top:382.70px;width:148.0px">$1,740,000.00</div>
<div class="tc" style="left:1719.0px;top:382.70px;width:148.0px">$0.00</div>
<div class="hl" style="top:446.00px"></div>
<div class="rl" style="top:409.75px;height:36.75px"></div>
<svg class="ic" style="left:37.5px;top:416.75px" width="21" height="18" viewBox="0 0 21 18"><path fill="#3a7bbf" d="M1.2 2.3h11.1l-2.6 2.6H3.7v10.3h9.2v-4.4l2.7-2.7v8.5c0 .7-.6 1.3-1.3 1.3H1.2C.5 17.9 0 17.3 0 16.6V3.6c0-.7.5-1.3 1.2-1.3z"/><path fill="#3a7bbf" d="M17.4.6l2.9 2.9-1.5 1.5-2.9-2.9zM15.1 2.9l2.9 2.9-7.9 7.9-3.6.8.7-3.7z"/></svg>
<svg class="ic" style="left:120.75px;top:416.75px" width="23" height="18" viewBox="0 0 23 18"><g fill="#1b7f4c"><path transform="translate(0,-.8)" d="M7 2.2l2 .1.6 2 1.3.6 1.8-1 1.4 1.4-1 1.8.6 1.3 2 .6v2l-2 .6-.6 1.3 1 1.8-1.4 1.4-1.8-1-1.3.6-.6 2H7.4l-.6-2-1.3-.6-1.8 1-1.4-1.4 1-1.8-.6-1.3-2-.6v-2l2-.6.6-1.3-1-1.8 1.4-1.4 1.8 1 1.3-.6zM8.4 7.2a2.6 2.6 0 100 5.2 2.6 2.6 0 000-5.2z"/><path d="M18.5 0l1 .1.3 1 .7.4.9-.5.7.7-.5.9.3.7 1 .3v1l-1 .3-.3.7.5.9-.7.7-.9-.5-.7.3-.3 1h-1l-.3-1-.7-.3-.9.5-.7-.7.5-.9-.3-.7-1-.3v-1l1-.3.3-.7-.5-.9.7-.7.9.5.7-.4zM19 2.6a1.3 1.3 0 100 2.6 1.3 1.3 0 000-2.6z"/><path d="M18.5 10.6l1 .1.3 1 .7.4.9-.5.7.7-.5.9.3.7 1 .3v1l-1 .3-.3.7.5.9-.7.7-.9-.5-.7.3-.3 1h-1l-.3-1-.7-.3-.9.5-.7-.7.5-.9-.3-.7-1-.3v-1l1-.3.3-.7-.5-.9.7-.7.9.5.7-.4zM19 13.2a1.3 1.3 0 100 2.6 1.3 1.3 0 000-2.6z"/></g></svg>
<svg class="ic" style="left:199.0px;top:416.75px" width="14" height="18" viewBox="0 0 14 18"><path fill="#7490b0" d="M0 0h8v5.5h6V18H0z"/><path fill="#7490b0" d="M9 0l5 4.6H9z"/><path fill="none" stroke="#fff" stroke-width="1.1" d="M6.1 7.3v4.4M6.1 11.7l3.6 1.6M6.1 11.7l-3.3 3.5"/></svg>
<svg class="ic" style="left:251.5px;top:416.25px" width="18" height="18" viewBox="0 0 18 18"><circle cx="8.7" cy="9.2" r="7.5" fill="none" stroke="#a3202f" stroke-width="2.2"/><path d="M3.6 4.1l10.2 10.2" stroke="#a3202f" stroke-width="2.2"/></svg>
<div class="tl up" style="left:299.0px;top:419.95px;width:191.0px">(P0002) PUENTE PEATONAL GRANDE</div>
<div class="tl" style="left:502.0px;top:419.95px;width:191.0px">CYBERPUERTA(Persona moral)</div>
<div class="tl up" style="left:705.0px;top:419.95px;width:158.0px">CONTRATO-2024-0008</div>
<div class="tl" style="left:875.0px;top:419.95px;width:101.0px">Revisado Proveedor</div>
<div class="tc" style="left:982.0px;top:419.95px;width:148.0px">$8,500,000,000.00</div>
<div class="tc" style="left:1130.0px;top:419.95px;width:147.0px">$1.00</div>
<div class="tc" style="left:1277.0px;top:419.95px;width:147.0px">$1,360,000,000.00</div>
<div class="tc" style="left:1424.0px;top:419.95px;width:147.0px">$9,860,000,000.00</div>
<div class="tc" style="left:1571.0px;top:419.95px;width:148.0px">$9,860,000,000.00</div>
<div class="tc" style="left:1719.0px;top:419.95px;width:148.0px">$0.00</div>
<div class="hl" style="top:483.25px"></div>
<div class="rl" style="top:447.00px;height:36.75px"></div>
<svg class="ic" style="left:37.5px;top:454.00px" width="21" height="18" viewBox="0 0 21 18"><path fill="#3a7bbf" d="M1.2 2.3h11.1l-2.6 2.6H3.7v10.3h9.2v-4.4l2.7-2.7v8.5c0 .7-.6 1.3-1.3 1.3H1.2C.5 17.9 0 17.3 0 16.6V3.6c0-.7.5-1.3 1.2-1.3z"/><path fill="#3a7bbf" d="M17.4.6l2.9 2.9-1.5 1.5-2.9-2.9zM15.1 2.9l2.9 2.9-7.9 7.9-3.6.8.7-3.7z"/></svg>
<svg class="ic" style="left:120.75px;top:454.00px" width="23" height="18" viewBox="0 0 23 18"><g fill="#1b7f4c"><path transform="translate(0,-.8)" d="M7 2.2l2 .1.6 2 1.3.6 1.8-1 1.4 1.4-1 1.8.6 1.3 2 .6v2l-2 .6-.6 1.3 1 1.8-1.4 1.4-1.8-1-1.3.6-.6 2H7.4l-.6-2-1.3-.6-1.8 1-1.4-1.4 1-1.8-.6-1.3-2-.6v-2l2-.6.6-1.3-1-1.8 1.4-1.4 1.8 1 1.3-.6zM8.4 7.2a2.6 2.6 0 100 5.2 2.6 2.6 0 000-5.2z"/><path d="M18.5 0l1 .1.3 1 .7.4.9-.5.7.7-.5.9.3.7 1 .3v1l-1 .3-.3.7.5.9-.7.7-.9-.5-.7.3-.3 1h-1l-.3-1-.7-.3-.9.5-.7-.7.5-.9-.3-.7-1-.3v-1l1-.3.3-.7-.5-.9.7-.7.9.5.7-.4zM19 2.6a1.3 1.3 0 100 2.6 1.3 1.3 0 000-2.6z"/><path d="M18.5 10.6l1 .1.3 1 .7.4.9-.5.7.7-.5.9.3.7 1 .3v1l-1 .3-.3.7.5.9-.7.7-.9-.5-.7.3-.3 1h-1l-.3-1-.7-.3-.9.5-.7-.7.5-.9-.3-.7-1-.3v-1l1-.3.3-.7-.5-.9.7-.7.9.5.7-.4zM19 13.2a1.3 1.3 0 100 2.6 1.3 1.3 0 000-2.6z"/></g></svg>
<svg class="ic" style="left:199.0px;top:454.00px" width="14" height="18" viewBox="0 0 14 18"><path fill="#7490b0" d="M0 0h8v5.5h6V18H0z"/><path fill="#7490b0" d="M9 0l5 4.6H9z"/><path fill="none" stroke="#fff" stroke-width="1.1" d="M6.1 7.3v4.4M6.1 11.7l3.6 1.6M6.1 11.7l-3.3 3.5"/></svg>
<svg class="ic" style="left:251.5px;top:453.50px" width="18" height="18" viewBox="0 0 18 18"><circle cx="8.7" cy="9.2" r="7.5" fill="none" stroke="#a3202f" stroke-width="2.2"/><path d="M3.6 4.1l10.2 10.2" stroke="#a3202f" stroke-width="2.2"/></svg>
<div class="tl up" style="left:299.0px;top:457.20px;width:191.0px">(P0002) PUENTE PEATONAL GRANDE</div>
<div class="tl" style="left:502.0px;top:457.20px;width:191.0px">MEDICS(Persona moral)</div>
<div class="tl up" style="left:705.0px;top:457.20px;width:158.0px">CONTRATO-2024-0007</div>
<div class="tl" style="left:875.0px;top:457.20px;width:101.0px">Revisado Proveedor</div>
<div class="tc" style="left:982.0px;top:457.20px;width:148.0px">$7,458,000.00</div>
<div class="tc" style="left:1130.0px;top:457.20px;width:147.0px">$1.00</div>
<div class="tc" style="left:1277.0px;top:457.20px;width:147.0px">$1,193,280.00</div>
<div class="tc" style="left:1424.0px;top:457.20px;width:147.0px">$8,651,280.00</div>
<div class="tc" style="left:1571.0px;top:457.20px;width:148.0px">$8,651,280.00</div>
<div class="tc" style="left:1719.0px;top:457.20px;width:148.0px">$0.00</div>
<div class="hl" style="top:520.50px"></div>
<div class="rl" style="top:484.25px;height:36.75px"></div>
<svg class="ic" style="left:37.5px;top:491.25px" width="21" height="18" viewBox="0 0 21 18"><path fill="#3a7bbf" d="M1.2 2.3h11.1l-2.6 2.6H3.7v10.3h9.2v-4.4l2.7-2.7v8.5c0 .7-.6 1.3-1.3 1.3H1.2C.5 17.9 0 17.3 0 16.6V3.6c0-.7.5-1.3 1.2-1.3z"/><path fill="#3a7bbf" d="M17.4.6l2.9 2.9-1.5 1.5-2.9-2.9zM15.1 2.9l2.9 2.9-7.9 7.9-3.6.8.7-3.7z"/></svg>
<svg class="ic" style="left:120.75px;top:491.25px" width="23" height="18" viewBox="0 0 23 18"><g fill="#1b7f4c"><path transform="translate(0,-.8)" d="M7 2.2l2 .1.6 2 1.3.6 1.8-1 1.4 1.4-1 1.8.6 1.3 2 .6v2l-2 .6-.6 1.3 1 1.8-1.4 1.4-1.8-1-1.3.6-.6 2H7.4l-.6-2-1.3-.6-1.8 1-1.4-1.4 1-1.8-.6-1.3-2-.6v-2l2-.6.6-1.3-1-1.8 1.4-1.4 1.8 1 1.3-.6zM8.4 7.2a2.6 2.6 0 100 5.2 2.6 2.6 0 000-5.2z"/><path d="M18.5 0l1 .1.3 1 .7.4.9-.5.7.7-.5.9.3.7 1 .3v1l-1 .3-.3.7.5.9-.7.7-.9-.5-.7.3-.3 1h-1l-.3-1-.7-.3-.9.5-.7-.7.5-.9-.3-.7-1-.3v-1l1-.3.3-.7-.5-.9.7-.7.9.5.7-.4zM19 2.6a1.3 1.3 0 100 2.6 1.3 1.3 0 000-2.6z"/><path d="M18.5 10.6l1 .1.3 1 .7.4.9-.5.7.7-.5.9.3.7 1 .3v1l-1 .3-.3.7.5.9-.7.7-.9-.5-.7.3-.3 1h-1l-.3-1-.7-.3-.9.5-.7-.7.5-.9-.3-.7-1-.3v-1l1-.3.3-.7-.5-.9.7-.7.9.5.7-.4zM19 13.2a1.3 1.3 0 100 2.6 1.3 1.3 0 000-2.6z"/></g></svg>
<svg class="ic" style="left:199.0px;top:491.25px" width="14" height="18" viewBox="0 0 14 18"><path fill="#7490b0" d="M0 0h8v5.5h6V18H0z"/><path fill="#7490b0" d="M9 0l5 4.6H9z"/><path fill="none" stroke="#fff" stroke-width="1.1" d="M6.1 7.3v4.4M6.1 11.7l3.6 1.6M6.1 11.7l-3.3 3.5"/></svg>
<svg class="ic" style="left:251.5px;top:490.75px" width="18" height="18" viewBox="0 0 18 18"><circle cx="8.7" cy="9.2" r="7.5" fill="none" stroke="#a3202f" stroke-width="2.2"/><path d="M3.6 4.1l10.2 10.2" stroke="#a3202f" stroke-width="2.2"/></svg>
<div class="tl up" style="left:299.0px;top:494.45px;width:191.0px">(P0002) PUENTE PEATONAL GRANDE</div>
<div class="tl" style="left:502.0px;top:494.45px;width:191.0px">MEDICS(Persona moral)</div>
<div class="tl up" style="left:705.0px;top:494.45px;width:158.0px">CONTRATO-2024-0006</div>
<div class="tl" style="left:875.0px;top:494.45px;width:101.0px">Revisado Proveedor</div>
<div class="tc" style="left:982.0px;top:494.45px;width:148.0px">$7,458,000.00</div>
<div class="tc" style="left:1130.0px;top:494.45px;width:147.0px">$1.00</div>
<div class="tc" style="left:1277.0px;top:494.45px;width:147.0px">$1,193,280.00</div>
<div class="tc" style="left:1424.0px;top:494.45px;width:147.0px">$8,651,280.00</div>
<div class="tc" style="left:1571.0px;top:494.45px;width:148.0px">$8,651,280.00</div>
<div class="tc" style="left:1719.0px;top:494.45px;width:148.0px">$0.00</div>
<div class="vl" style="left:12.0px"></div>
<div class="vl" style="left:81.0px"></div>
<div class="vl" style="left:183.0px"></div>
<div class="vl" style="left:227.0px"></div>
<div class="vl" style="left:496.0px"></div>
<div class="vl" style="left:699.0px"></div>
<div class="vl" style="left:869.0px"></div>
<div class="vl" style="left:982.0px"></div>
<div class="vl" style="left:1130.0px"></div>
<div class="vl" style="left:1277.0px"></div>
<div class="vl" style="left:1424.0px"></div>
<div class="vl" style="left:1571.0px"></div>
<div class="vl" style="left:1719.0px"></div>
</div>
<div id="vtrack" class="abs"></div>
<div id="vthumb" class="abs"></div>
<div id="htrack" class="abs"></div>
<div id="hthumb" class="abs"></div>
<div id="tfoot" class="abs">
<div class="fvl" style="left:0"></div>
<div class="fvl" style="left:12.0px"></div>
<div class="fvl" style="left:81.0px"></div>
<div class="fvl" style="left:183.0px"></div>
<div class="fvl" style="left:227.0px"></div>
<div class="fvl" style="left:292.0px"></div>
<div class="fvl" style="left:496.0px"></div>
<div class="fvl" style="left:699.0px"></div>
<div class="fvl" style="left:869.0px"></div>
<div class="fvl" style="left:982.0px"></div>
<div class="fvl" style="left:1130.0px"></div>
<div class="fvl" style="left:1277.0px"></div>
<div class="fvl" style="left:1424.0px"></div>
<div class="fvl" style="left:1571.0px"></div>
<div class="fvl" style="left:1719.0px"></div>
<div class="ft" style="left:988.8px;width:135.2px">$8,579,568,000.00</div>
<div class="ft" style="left:1136.8px;width:134.2px">$34.08</div>
<div class="ft" style="left:1283.8px;width:134.2px">$1,372,650,880.00</div>
<div class="ft" style="left:1430.8px;width:134.2px">$9,952,218,880.00</div>
<div class="ft" style="left:1577.8px;width:135.2px">$9,952,218,880.00</div>
<div class="ft" style="left:1725.8px;width:80.7px">$155,895.85</div>
</div>
<div class="abs mostrar">Mostrar</div>
<div class="abs sel"></div>
<div class="abs seltx">50</div>
<svg class="abs" style="left:149px;top:861px" width="11" height="7" viewBox="0 0 11 7"><path d="M1 1l4.5 4.5L10 1" fill="none" stroke="#333" stroke-width="1.8"/></svg>
<div class="abs reg">registros</div>
<div class="abs pag">
<div class="pg" style="left:0;width:76px;border-left:0">Primero</div>
<div class="pg" style="left:75px;width:77px">Anterior</div>
<div class="pg act" style="left:151px;width:36px">1</div>
<div class="pg" style="left:187px;width:84px;border-left:0">Siguiente</div>
<div class="pg" style="left:270px;width:69px">Último</div>
</div>
</body></html>
